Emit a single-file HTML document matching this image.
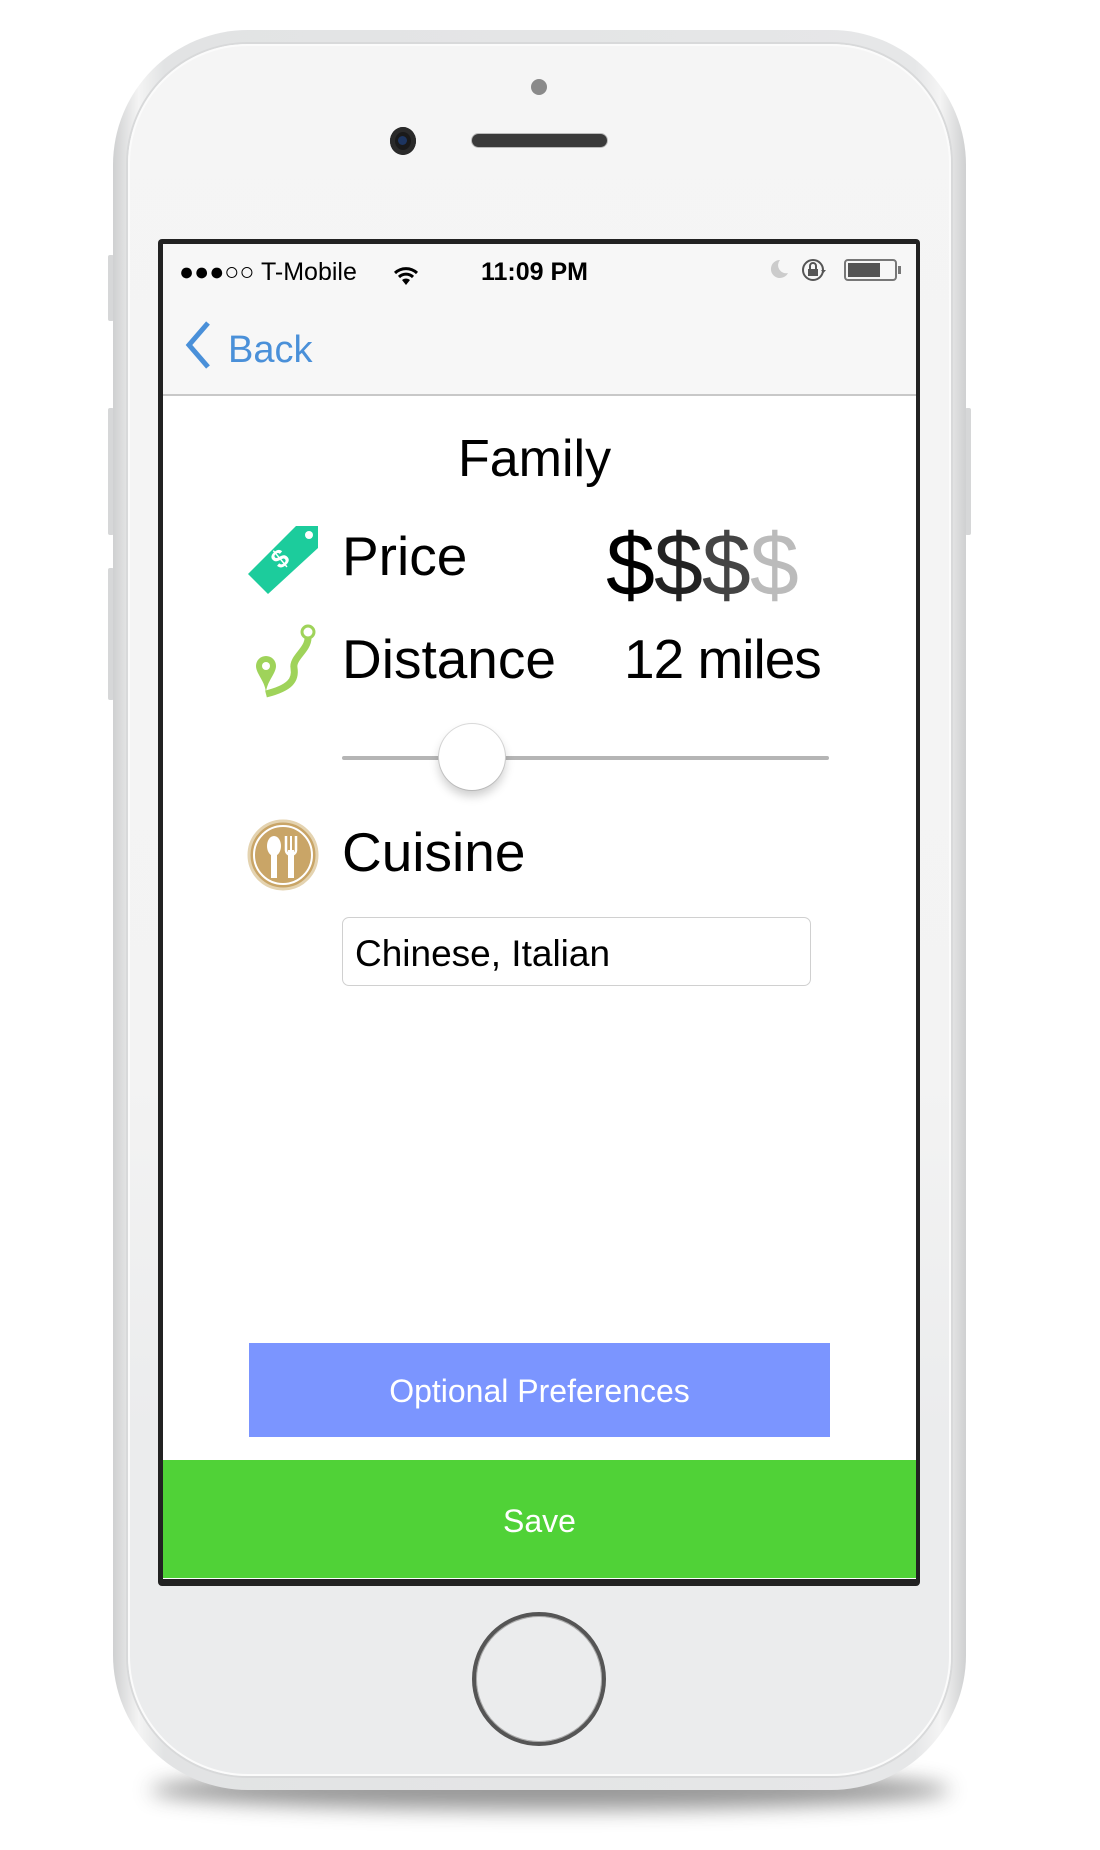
<!DOCTYPE html>
<html><head><meta charset="utf-8"><style>
*{margin:0;padding:0;box-sizing:border-box}
body{width:1100px;height:1850px;background:#fff;position:relative;overflow:hidden;font-family:"Liberation Sans",sans-serif}
.abs{position:absolute}
.shadow{left:150px;top:1770px;width:800px;height:40px;border-radius:50%;background:#555;filter:blur(10px);opacity:.6}
.phone{left:113px;top:30px;width:853px;height:1760px;border-radius:135px;background:linear-gradient(90deg,#cfd0d1,#f4f4f4 3%,#e2e3e4 6%,#e6e7e8 94%,#f4f4f4 97%,#cfd0d1)}
.face{left:128px;top:44px;width:823px;height:1732px;border-radius:120px;background:linear-gradient(180deg,#f5f5f5 0%,#f3f3f3 60%,#ebeced 80%,#ebeced 100%);box-shadow:inset 0 0 0 2px #fbfbfb,0 0 0 2px #d8d9da}
.btn{background:#d6d7d8;width:6px;border-radius:2px}
.screen{left:158px;top:239px;width:762px;height:1347px;background:#222;border-radius:4px}
.scr{left:163px;top:244px;width:753px;height:1335px;background:#fff;overflow:hidden}
.t{position:absolute;white-space:nowrap;line-height:1}
</style></head><body>
<div class="abs shadow"></div>
<div class="abs btn" style="left:108px;top:255px;height:66px"></div>
<div class="abs btn" style="left:108px;top:408px;height:127px"></div>
<div class="abs btn" style="left:108px;top:568px;height:132px"></div>
<div class="abs btn" style="left:965px;top:408px;height:127px"></div>
<div class="abs phone"></div>
<div class="abs face"></div>
<div class="abs" style="left:531px;top:79px;width:16px;height:16px;border-radius:50%;background:#8a8a8a"></div>
<div class="abs" style="left:390px;top:127px;width:26px;height:28px;border-radius:50%;background:#1a1a1a;box-shadow:inset 0 0 0 5px #2a2a2a"><div style="position:absolute;left:8px;top:9px;width:9px;height:9px;border-radius:50%;background:#1d3560"></div></div>
<div class="abs" style="left:472px;top:134px;width:135px;height:13px;border-radius:7px;background:#3a3a3a;box-shadow:0 0 0 1px #bbb"></div>
<div class="abs screen"></div>
<div class="abs scr">
  <div class="abs" style="left:0;top:0;width:753px;height:152px;background:#f7f7f7;border-bottom:2px solid #c8c8c8"></div>
  <div class="t" style="left:16px;top:16px;font-size:25px;color:#000">●●●○○ T-Mobile</div>
  <svg class="abs" style="left:230px;top:22px" width="26" height="20" viewBox="0 0 26 20"><path d="M2 7a16 16 0 0 1 22 0M6 11a10 10 0 0 1 14 0" stroke="#000" stroke-width="3" fill="none"/><path d="M9 14l4 5 4-5a6 6 0 0 0-8 0z" fill="#000"/></svg>
  <div class="t" style="left:318px;top:16px;font-size:25px;font-weight:bold;color:#000">11:09 PM</div>
  <svg class="abs" style="left:603px;top:14px" width="24" height="22"><path d="M14 2a9 9 0 1 0 8 13a8 8 0 0 1-8-13z" fill="#ccc"/></svg>
  <svg class="abs" style="left:638px;top:14px" width="28" height="26"><circle cx="12" cy="12" r="10" fill="none" stroke="#555" stroke-width="2"/><rect x="7" y="11" width="10" height="7" fill="#555"/><path d="M9 11V8a3 3 0 0 1 6 0v3" fill="none" stroke="#555" stroke-width="2"/><path d="M20 12l5 0-2.5 3z" fill="#555"/></svg>
  <div class="abs" style="left:681px;top:15px;width:53px;height:22px;border:2px solid #777;border-radius:4px;padding:2px"><div style="width:32px;height:14px;background:#555"></div></div>
  <div class="abs" style="left:735px;top:22px;width:3px;height:8px;background:#777"></div>
  <svg class="abs" style="left:20px;top:76px" width="32" height="50"><path d="M25 3L6 25l19 22" stroke="#4a90d9" stroke-width="5" fill="none"/></svg>
  <div class="t" style="left:65px;top:87px;font-size:38px;color:#4a90d9">Back</div>
</div>
<div class="t" style="left:458px;top:433px;font-size:52px;color:#000">Family</div>
<svg class="abs" style="left:246px;top:524px" width="74" height="72" viewBox="0 0 74 72"><path d="M50 2h22v22L22 70 2 50z" fill="#1ccc9c"/><circle cx="63" cy="11" r="4" fill="#fff"/><text x="29" y="48" font-size="26" font-weight="bold" fill="#fff" transform="rotate(-40 29 40)" font-family="Liberation Sans">$</text></svg>
<div class="t" style="left:342px;top:529px;font-size:55px;color:#000">Price</div>
<div class="t" style="left:606px;top:521px;font-size:88px;letter-spacing:-1px"><span style="color:#000">$</span><span style="color:#222">$</span><span style="color:#444">$</span><span style="color:#bbb">$</span></div>
<svg class="abs" style="left:252px;top:622px" width="64" height="76" viewBox="0 0 64 76"><path d="M4 44a10 10 0 0 1 20 0c0 8-10 16-10 28C14 60 4 52 4 44z" fill="#9fd35a"/><circle cx="14" cy="44" r="4" fill="#fff"/><path d="M14 72c24-6 30-14 28-26-2-10 14-18 14-30" stroke="#9fd35a" stroke-width="7" fill="none"/><circle cx="56" cy="10" r="6" fill="none" stroke="#9fd35a" stroke-width="3"/></svg>
<div class="t" style="left:342px;top:632px;font-size:55px;color:#000">Distance</div>
<div class="t" style="left:624px;top:632px;font-size:55px;color:#000;letter-spacing:-1px">12 miles</div>
<div class="abs" style="left:342px;top:756px;width:487px;height:4px;background:#b5b5b5;border-radius:2px"></div>
<div class="abs" style="left:439px;top:724px;width:66px;height:66px;border-radius:50%;background:#fff;box-shadow:0 6px 10px rgba(0,0,0,.2),0 0 0 1px #ddd"></div>
<svg class="abs" style="left:246px;top:818px" width="74" height="74" viewBox="0 0 74 74"><circle cx="37" cy="37" r="34" fill="#c9a567" stroke="#e4d3b0" stroke-width="3"/><circle cx="37" cy="37" r="29" fill="none" stroke="#fff" stroke-width="2"/><ellipse cx="28" cy="28" rx="7" ry="10" fill="#fff"/><rect x="25" y="34" width="6" height="26" fill="#fff"/><path d="M40 18v14a5 5 0 0 0 10 0V18" fill="none" stroke="#fff" stroke-width="2.5"/><path d="M45 18v14" stroke="#fff" stroke-width="2"/><rect x="42" y="32" width="6" height="28" fill="#fff"/></svg>
<div class="t" style="left:342px;top:825px;font-size:55px;color:#000">Cuisine</div>
<div class="abs" style="left:342px;top:917px;width:469px;height:69px;border:1.5px solid #d0d0d0;border-radius:7px;background:#fff"></div>
<div class="t" style="left:355px;top:935px;font-size:37px;color:#000">Chinese, Italian</div>
<div class="abs" style="left:249px;top:1343px;width:581px;height:94px;background:#7b95ff"></div>
<div class="t" style="left:249px;top:1375px;width:581px;text-align:center;font-size:32px;color:#fff">Optional Preferences</div>
<div class="abs" style="left:163px;top:1460px;width:753px;height:118px;background:#50d237"></div>
<div class="t" style="left:163px;top:1505px;width:753px;text-align:center;font-size:32px;color:#fff">Save</div>
<div class="abs" style="left:472px;top:1612px;width:134px;height:134px;border-radius:50%;border:4px solid #555;box-shadow:inset 0 0 0 1px #aaa;background:#ebeced"></div>
</body></html>
